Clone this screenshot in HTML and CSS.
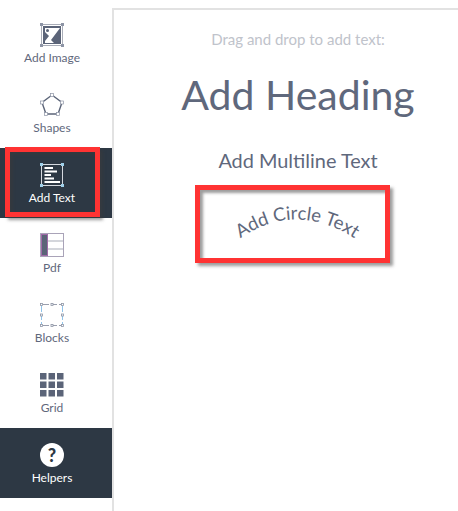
FILE: index.html
```html
<!DOCTYPE html>
<html>
<head>
    <title>Add Text</title>
    <link rel="stylesheet" href="styles.css">
</head>
<body>
    <div class="editor">
        <ul class="sidebar">
            <li class="tool">
                <svg class="icon" viewBox="0 0 24 24">
                    <rect x="1.5" y="1.5" width="21" height="21" fill="none" stroke="#a9adb8" stroke-width="1"/>
                    <rect x="3" y="3" width="18" height="18" fill="#5b6478"/>
                    <path d="M5 5H20L11 17 14 20H5V18L9 13 5 9Z" fill="#fff"/>
                    <circle cx="7.5" cy="7.5" r="1.5" fill="#5b6478"/>
                    <rect x="0" y="0" width="3" height="3" fill="#8d94a5"/>
                    <rect x="21" y="0" width="3" height="3" fill="#8d94a5"/>
                    <rect x="0" y="21" width="3" height="3" fill="#8d94a5"/>
                    <rect x="21" y="21" width="3" height="3" fill="#8d94a5"/>
                </svg>
                <span>Add Image</span>
            </li>
            <li class="tool">
                <svg class="icon" viewBox="0 0 24 24">
                    <path d="M12 2 22 9.5 18 21H6L2 9.5Z" fill="none" stroke="#5b6478" stroke-width="1.4"/>
                    <rect x="10.5" y="0.5" width="3" height="3" fill="#fff" stroke="#8d94a5" stroke-width=".7"/>
                    <rect x="20.5" y="8" width="3" height="3" fill="#fff" stroke="#8d94a5" stroke-width=".7"/>
                    <rect x="16.5" y="19.5" width="3" height="3" fill="#fff" stroke="#8d94a5" stroke-width=".7"/>
                    <rect x="4.5" y="19.5" width="3" height="3" fill="#fff" stroke="#8d94a5" stroke-width=".7"/>
                    <rect x="0.5" y="8" width="3" height="3" fill="#fff" stroke="#8d94a5" stroke-width=".7"/>
                </svg>
                <span>Shapes</span>
            </li>
            <li class="tool dark">
                <svg class="icon" viewBox="0 0 24 24">
                    <rect x="1.5" y="1.5" width="21" height="21" fill="none" stroke="#d5d9df" stroke-width="1"/>
                    <path d="M4.5 4H13V6H4.5ZM4.5 7.5H17V9.5H4.5ZM4.5 11H11V13H4.5ZM4.5 14.5H14V16.5H4.5ZM4.5 18H20V20H4.5Z" fill="#fff"/>
                    <rect x="0" y="0" width="3" height="3" fill="#9fd0ea"/>
                    <rect x="21" y="0" width="3" height="3" fill="#9fd0ea"/>
                    <rect x="0" y="21" width="3" height="3" fill="#9fd0ea"/>
                    <rect x="21" y="21" width="3" height="3" fill="#9fd0ea"/>
                </svg>
                <span>Add Text</span>
                <div class="callout callout-tool"></div>
            </li>
            <li class="tool">
                <svg class="icon" viewBox="0 0 24 24">
                    <rect x="0.5" y="0.5" width="23" height="23" fill="#fff" stroke="#a9a3b8"/>
                    <rect x="1" y="1" width="7" height="22" fill="#a06aa8"/>
                    <rect x="2" y="2" width="5" height="20" fill="#5b6478"/>
                    <path d="M8 8H23M8 16H23" stroke="#a9adb8"/>
                </svg>
                <span>Pdf</span>
            </li>
            <li class="tool">
                <svg class="icon" viewBox="0 0 24 24">
                    <path d="M1.5 3V21M22.5 3V21" stroke="#8fc3ea" stroke-dasharray="6 2"/>
                    <path d="M3 1.5H21M3 22.5H21" stroke="#9a9fae" stroke-dasharray="6 2"/>
                    <g fill="#fff" stroke="#8d94a5" stroke-width=".8">
                        <rect x="0.5" y="0.5" width="2" height="2"/>
                        <rect x="11" y="0.5" width="2" height="2"/>
                        <rect x="21.5" y="0.5" width="2" height="2"/>
                        <rect x="0.5" y="11" width="2" height="2"/>
                        <rect x="21.5" y="11" width="2" height="2"/>
                        <rect x="0.5" y="21.5" width="2" height="2"/>
                        <rect x="11" y="21.5" width="2" height="2"/>
                        <rect x="21.5" y="21.5" width="2" height="2"/>
                    </g>
                </svg>
                <span>Blocks</span>
            </li>
            <li class="tool">
                <svg class="icon" viewBox="0 0 24 24" fill="#5b6478">
                    <rect x="0" y="0" width="6.5" height="6.5"/>
                    <rect x="8.5" y="0" width="6.5" height="6.5"/>
                    <rect x="17" y="0" width="6.5" height="6.5"/>
                    <rect x="0" y="8.5" width="6.5" height="6.5"/>
                    <rect x="8.5" y="8.5" width="6.5" height="6.5"/>
                    <rect x="17" y="8.5" width="6.5" height="6.5"/>
                    <rect x="0" y="17" width="6.5" height="6.5"/>
                    <rect x="8.5" y="17" width="6.5" height="6.5"/>
                    <rect x="17" y="17" width="6.5" height="6.5"/>
                </svg>
                <span>Grid</span>
            </li>
            <li class="tool dark">
                <div class="help-icon">?</div>
                <span>Helpers</span>
            </li>
        </ul>

        <div class="panel">
            <p class="hint">Drag and drop to add text:</p>
            <h1>Add Heading</h1>
            <h2>Add Multiline Text</h2>
            <div class="circle-text">
                <svg class="curve" viewBox="0 0 195 78">
                    <defs>
                        <path id="arc" d="M40 57 Q100 12 165 57"/>
                    </defs>
                    <text>
                        <textPath href="#arc" startOffset="50%" text-anchor="middle">Add Circle Text</textPath>
                    </text>
                </svg>
                <div class="callout"></div>
            </div>
        </div>
    </div>
</body>
</html>
```

FILE: styles.css
```css
* {
    margin: 0px;
    padding: 0px;
    box-sizing: border-box;
    font-family: 'Lato', sans-serif;
}

html, body {
    background-color: #fff;
    height: 100%;
    overflow: hidden;
}

.editor {
    display: flex;
    padding-top: 8px;
    height: 511px;
}

.sidebar {
    list-style: none;
    width: 112px;
    flex-shrink: 0;
}

.tool {
    position: relative;
    height: 70px;
    display: flex;
    flex-direction: column;
    align-items: center;
    padding-top: 15px;
    padding-right: 8px;
    font-size: 12px;
    color: #5f687c;
}

.tool span {
    margin-top: 3px;
    line-height: 15px;
}

.icon {
    width: 24px;
    height: 24px;
    display: block;
}

.dark {
    background-color: #2d3844;
    color: #fff;
}

.help-icon {
    width: 24px;
    height: 24px;
    border-radius: 50%;
    background-color: #fff;
    color: #2d3844;
    font-size: 18px;
    font-weight: 900;
    line-height: 24px;
    text-align: center;
}

.callout {
    position: absolute;
    top: 0;
    left: 0;
    right: 0;
    bottom: 0;
    border: 5px solid #ff3333;
    box-shadow: 3px 3px 3px rgba(60, 60, 60, 0.5), inset 3px 3px 3px rgba(60, 60, 60, 0.5);
}

.callout-tool {
    top: -1px;
    left: 5px;
    right: 12px;
    bottom: 1px;
}

.panel {
    flex: 1;
    border-top: 2px solid #e2e2e2;
    border-left: 2px solid #e2e2e2;
    display: flex;
    flex-direction: column;
    align-items: center;
    padding-left: 24px;
}

.hint {
    margin-top: 20px;
    font-size: 15px;
    line-height: 18px;
    color: #c0c3cb;
}

h1 {
    margin-top: 20px;
    font-size: 41px;
    font-weight: 400;
    line-height: 54px;
    color: #5f687c;
}

h2 {
    margin-top: 26px;
    font-size: 19.9px;
    font-weight: 400;
    line-height: 24px;
    color: #5f687c;
}

.circle-text {
    position: relative;
    width: 195px;
    height: 78px;
    margin-top: 13px;
    margin-right: 11px;
}

.curve {
    display: block;
    width: 195px;
    height: 78px;
}

.curve text {
    font-size: 18.5px;
    fill: #5f687c;
}
```
